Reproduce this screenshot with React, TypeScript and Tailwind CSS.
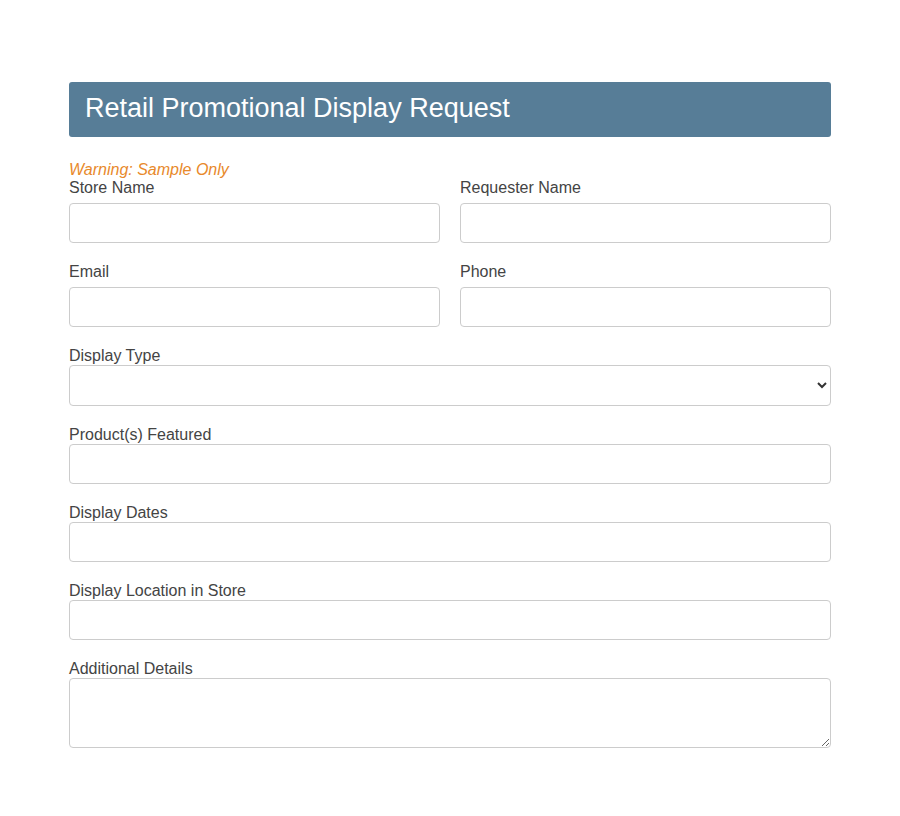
import type { ReactNode } from 'react'

function Field({ label, tight, children }: { label: string; tight?: boolean; children: ReactNode }) {
  return (
    <div className="flex flex-col">
      <label className={`pt-[1px] text-[16px] leading-[18px] text-[#444] ${tight ? 'mb-0' : 'mb-[6px]'}`}>{label}</label>
      {children}
    </div>
  )
}

const inputCls =
  'w-full h-[40px] rounded-[4px] border border-[#ccc] bg-white px-3 text-[16px] text-[#333] outline-none'

export default function App() {
  return (
    <div className="min-h-screen bg-white font-['Liberation_Sans',Arial,sans-serif]">
      <div className="mx-auto w-[762px] pt-[82px]">
        <div className="h-[55px] rounded-[3px] bg-[#577d97] px-4 pb-[3px] flex items-center">
          <h1 className="text-[27px] text-white leading-none">Retail Promotional Display Request</h1>
        </div>

        <p className="mt-[24px] text-[16px] leading-[17px] italic text-[#e8892b]">Warning: Sample Only</p>

        <div className="grid grid-cols-2 gap-x-5 gap-y-[19px]">
          <Field label="Store Name">
            <input className={inputCls} />
          </Field>
          <Field label="Requester Name">
            <input className={inputCls} />
          </Field>
          <Field label="Email">
            <input className={inputCls} />
          </Field>
          <Field label="Phone">
            <input className={inputCls} />
          </Field>
        </div>

        <div className="mt-[19px] flex flex-col gap-[19px]">
          <Field label="Display Type" tight>
            <select className="w-full h-[41px] rounded-[4px] border border-[#ccc] bg-white px-2 text-[16px] text-[#333]">
              <option></option>
            </select>
          </Field>
          <Field label="Product(s) Featured" tight>
            <input className={inputCls} />
          </Field>
          <Field label="Display Dates" tight>
            <input className={inputCls} />
          </Field>
          <Field label="Display Location in Store" tight>
            <input className={inputCls} />
          </Field>
          <Field label="Additional Details" tight>
            <textarea className="w-full h-[70px] rounded-[4px] border border-[#ccc] bg-white px-3 py-2 text-[16px] text-[#333] outline-none" />
          </Field>
        </div>
      </div>
    </div>
  )
}
